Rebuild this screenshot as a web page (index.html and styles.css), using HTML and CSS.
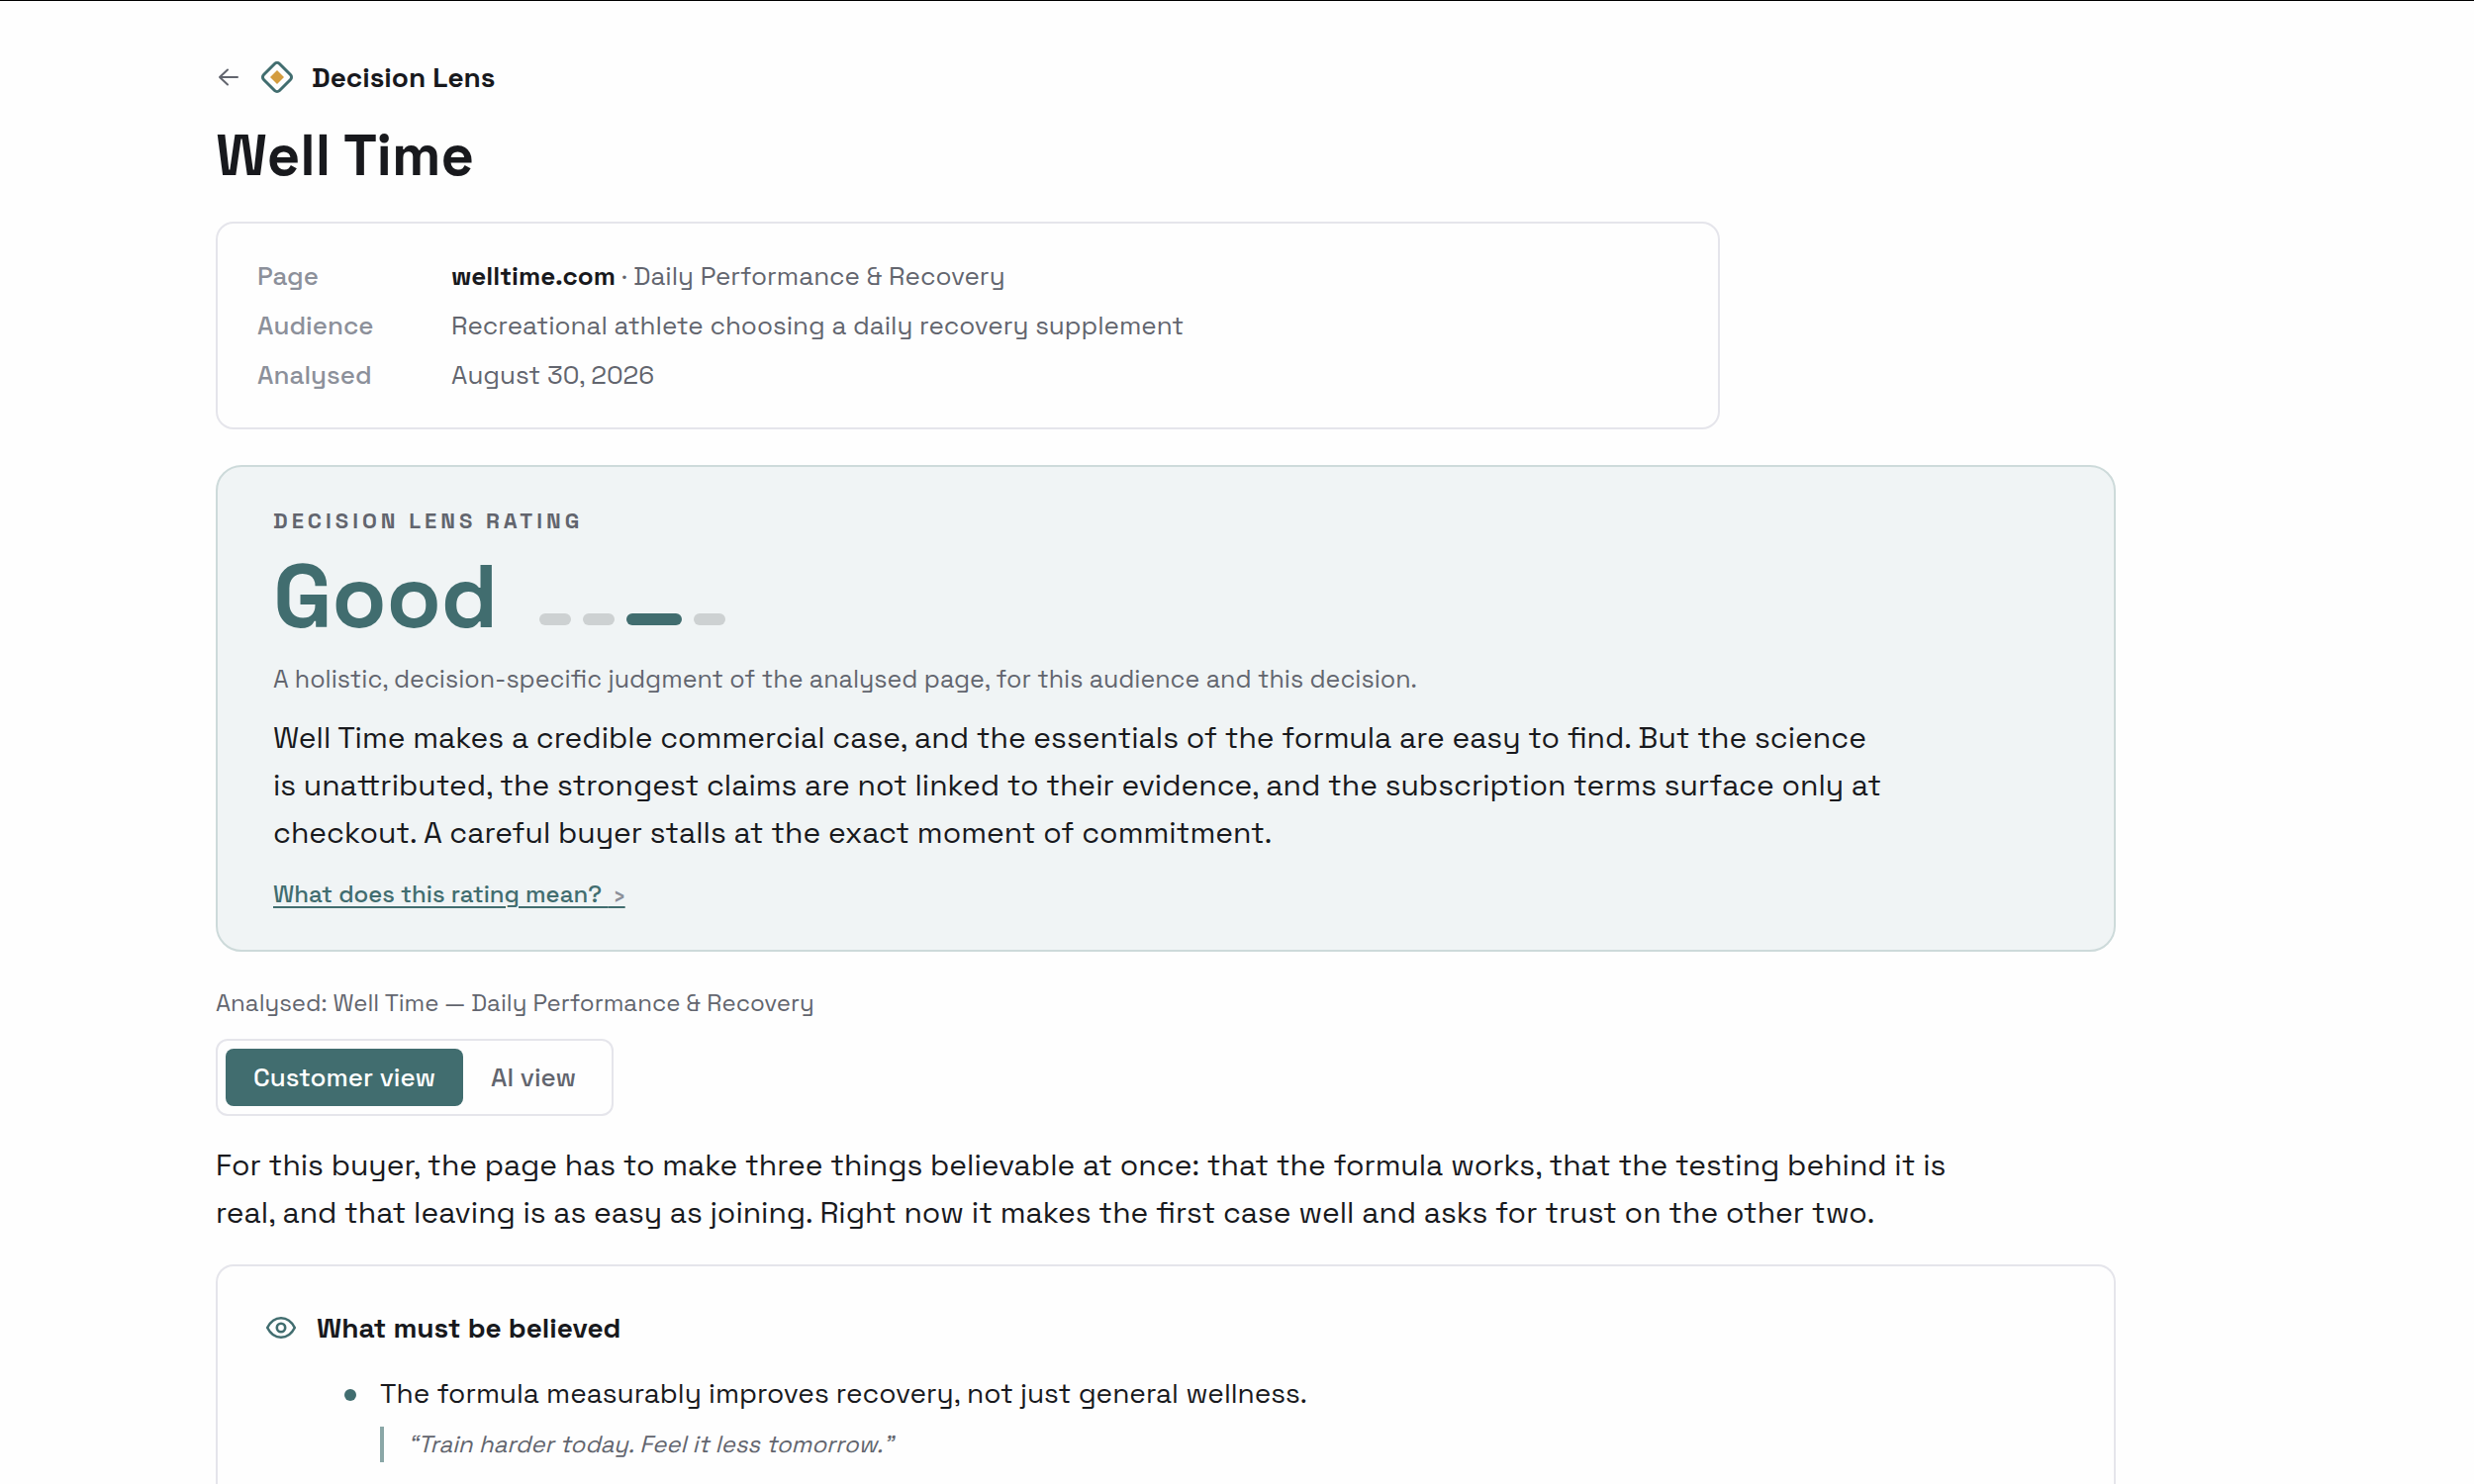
FILE: index.html
```html
<!DOCTYPE html>
<html lang="en">
<head>
    <meta charset="UTF-8">
    <meta name="viewport" content="width=device-width, initial-scale=1.0">
    <title>Decision Lens - Well Time</title>
    <link rel="stylesheet" href="styles.css">
</head>
<body>
    <main class="container">
        <header class="brand">
            <a class="back" href="#" aria-label="Back">
                <svg width="22" height="20" viewBox="0 0 22 20" fill="none" stroke="currentColor" stroke-width="2" stroke-linecap="round" stroke-linejoin="round">
                    <path d="M20 10H2M10 2.500L2 10l8 7.500"/>
                </svg>
            </a>
            <svg class="logo" width="34" height="34" viewBox="0 0 34 34">
                <rect x="5.7" y="5.7" width="22.600" height="22.600" rx="3.500" fill="none" stroke="#416d6f" stroke-width="3" transform="rotate(45 17 17)"/>
                <path d="M17 10l7 7-7 7-7-7z" fill="#d39c3f"/>
            </svg>
            <span class="brand-name">Decision Lens</span>
        </header>
        <h1>Well Time</h1>

        <dl class="card details">
            <div class="detail-row">
                <dt>Page</dt>
                <dd><strong>welltime.com</strong> · Daily Performance &amp; Recovery</dd>
            </div>
            <div class="detail-row">
                <dt>Audience</dt>
                <dd>Recreational athlete choosing a daily recovery supplement</dd>
            </div>
            <div class="detail-row">
                <dt>Analysed</dt>
                <dd>August 30, 2026</dd>
            </div>
        </dl>

        <section class="rating">
            <h2 class="rating-label">Decision Lens Rating</h2>
            <div class="rating-score">
                <span class="rating-value">Good</span>
                <div class="scale">
                    <span class="step"></span>
                    <span class="step"></span>
                    <span class="step step-active"></span>
                    <span class="step"></span>
                </div>
            </div>
            <p class="rating-note">A holistic, decision-specific judgment of the analysed page, for this audience and this decision.</p>
            <p class="body-text rating-text">Well Time makes a credible commercial case, and the essentials of the formula are easy to find. But the science is unattributed, the strongest claims are not linked to their evidence, and the subscription terms surface only at checkout. A careful buyer stalls at the exact moment of commitment.</p>
            <a class="rating-link" href="#">What does this rating mean? <span class="chevron">&nbsp;›</span></a>
        </section>

        <p class="analysed">Analysed: Well Time — Daily Performance &amp; Recovery</p>
        <div class="tabs">
            <button class="tab tab-active" type="button">Customer view</button>
            <button class="tab" type="button">AI view</button>
        </div>
        <p class="body-text intro">For this buyer, the page has to make three things believable at once: that the formula works, that the testing behind it is real, and that leaving is as easy as joining. Right now it makes the first case well and asks for trust on the other two.</p>

        <section class="card beliefs">
            <h2 class="beliefs-title">
                <svg width="32" height="24" viewBox="0 0 32 24" fill="none" stroke="#416d6f" stroke-width="2.6" stroke-linejoin="round">
                    <path d="M2.200 12C5.600 5.200 10.400 2.200 16 2.200S26.400 5.200 29.800 12C26.400 18.800 21.600 21.800 16 21.800S5.600 18.800 2.200 12z"/>
                    <circle cx="16" cy="12" r="4.200"/>
                </svg>
                What must be believed
            </h2>
            <ul>
                <li>
                    The formula measurably improves recovery, not just general wellness.
                    <blockquote>“Train harder today. Feel it less tomorrow.”</blockquote>
                </li>
            </ul>
        </section>
    </main>
</body>
</html>
```
FILE: styles.css
```css
* {
    box-sizing: border-box;
}
body {
    font-family: "Space Grotesk", Inter, "Liberation Sans", sans-serif;
    margin: 0;
    background: #fefefe;
    color: #18191d;
    border-top: 1px solid #000;
}
h1, h2, p, dl, dd, ul, blockquote {
    margin: 0;
    padding: 0;
}
.container {
    max-width: 2138px;
    padding: 58px 0 0 218px;
}
.brand {
    display: flex;
    align-items: center;
    height: 38px;
}
.back {
    display: flex;
    margin-right: 21px;
    padding-left: 2px;
    color: #62656e;
}
.logo {
    margin-right: 18px;
}
.brand-name {
    font-size: 28px;
    font-weight: 600;
}
h1 {
    font-size: 58px;
    font-weight: 700;
    line-height: 72px;
    margin: 24px 0 31px;
}
.card {
    border: 2px solid #e5e5eb;
    border-radius: 18px;
}
.details {
    display: flex;
    flex-direction: column;
    gap: 12px;
    max-width: 1520px;
    padding: 34px 40px;
    margin-bottom: 36px;
    font-size: 26px;
    line-height: 38px;
}
.detail-row {
    display: flex;
}
.detail-row dt {
    width: 196px;
    font-weight: 500;
    color: #8c909a;
}
.detail-row dd {
    color: #62656e;
}
.detail-row strong {
    font-weight: 600;
    color: #18191d;
}
.rating {
    padding: 40px 56px 38px;
    border: 2px solid #cddada;
    border-radius: 26px;
    background: #f0f4f5;
}
.rating-label {
    font-size: 22px;
    font-weight: 600;
    line-height: 28px;
    letter-spacing: 4px;
    text-transform: uppercase;
    color: #62656e;
}
.rating-score {
    display: flex;
    align-items: flex-end;
    gap: 42px;
    margin: 16px 0 18px;
}
.rating-value {
    font-size: 90px;
    font-weight: 700;
    line-height: 94px;
    color: #416d6f;
}
.scale {
    display: flex;
    gap: 12px;
    padding-bottom: 18px;
}
.step {
    width: 32px;
    height: 12px;
    border-radius: 6px;
    background: #cdd1d2;
}
.step-active {
    width: 56px;
    background: #416d6f;
}
.rating-note {
    font-size: 25px;
    line-height: 36px;
    color: #62656e;
}
.body-text {
    font-size: 30px;
    line-height: 48px;
}
.rating-text {
    max-width: 1632px;
    margin: 18px 0 20px;
}
.rating-link {
    display: inline-block;
    font-size: 24px;
    font-weight: 500;
    line-height: 36px;
    color: #416d6f;
    text-underline-offset: 4px;
    text-decoration-thickness: 2px;
}
.chevron {
    color: #8c909a;
}
.analysed {
    margin: 34px 0 18px;
    font-size: 24px;
    line-height: 36px;
    color: #62656e;
}
.tabs {
    display: inline-flex;
    padding: 8px;
    border: 2px solid #e5e5eb;
    border-radius: 12px;
}
.tab {
    padding: 0 28px;
    border: none;
    border-radius: 8px;
    background: none;
    font-family: inherit;
    font-size: 26px;
    font-weight: 500;
    line-height: 58px;
    color: #62656e;
    cursor: pointer;
}
.tab-active {
    background: #416d6f;
    color: #fff;
}
.intro {
    max-width: 1800px;
    margin: 26px 0 28px;
}
.beliefs {
    padding: 42px 48px 22px;
    border-bottom: none;
    border-radius: 18px 18px 0 0;
}
.beliefs-title {
    display: flex;
    align-items: center;
    gap: 20px;
    font-size: 28px;
    font-weight: 600;
    line-height: 40px;
}
.beliefs ul {
    list-style: none;
    margin-top: 24px;
    padding-left: 116px;
}
.beliefs li {
    position: relative;
    font-size: 28px;
    line-height: 44px;
}
.beliefs li::before {
    content: "";
    position: absolute;
    left: -36px;
    top: 18px;
    width: 12px;
    height: 12px;
    border-radius: 50%;
    background: #416d6f;
}
.beliefs blockquote {
    margin-top: 12px;
    padding-left: 24px;
    border-left: 4px solid #8aa7a7;
    font-size: 24px;
    font-style: italic;
    line-height: 36px;
    color: #62656e;
}
```
